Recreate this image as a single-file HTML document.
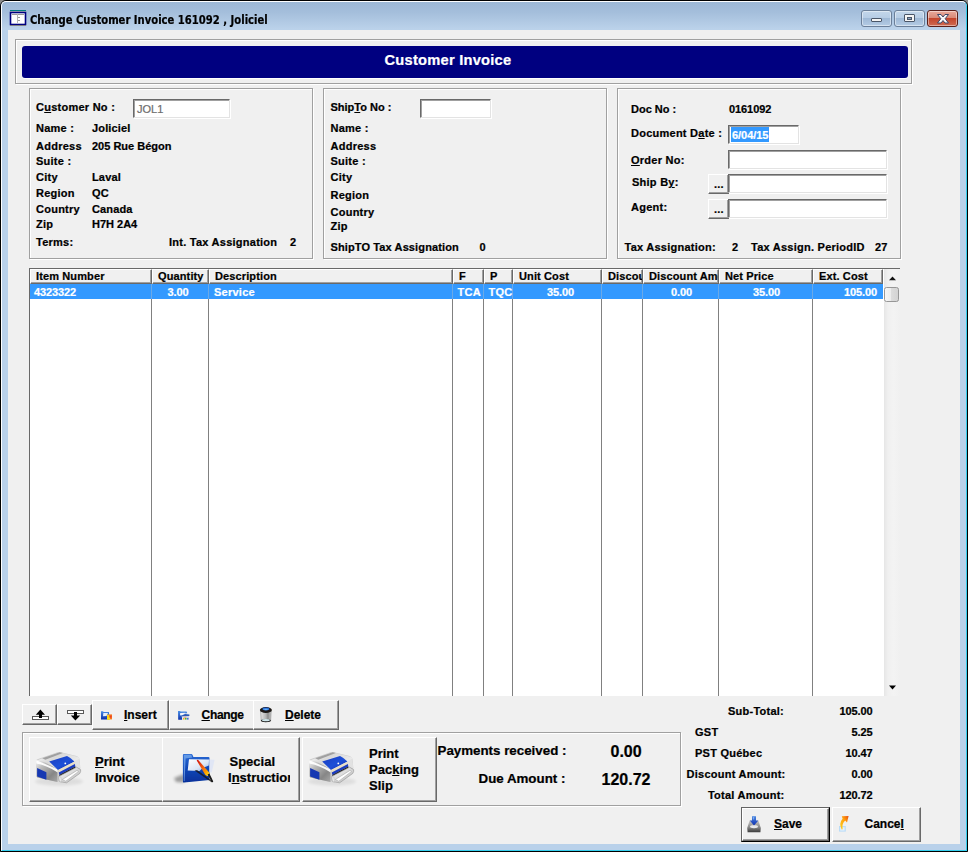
<!DOCTYPE html>
<html lang="en"><head><meta charset="utf-8"><title>Change Customer Invoice 161092 , Joliciel</title>
<style>
html,body{margin:0;padding:0}
body{width:968px;height:852px;position:relative;overflow:hidden;background:#8a8a8a;font-family:"Liberation Sans",Arial,sans-serif;font-weight:700;font-size:11px;color:#000}
div,span{position:absolute;box-sizing:border-box}
.t{white-space:nowrap;line-height:16px;letter-spacing:0.25px;-webkit-text-stroke:0.22px currentColor}
.t u{text-decoration:underline;text-underline-offset:1px}
.frame{left:0;top:0;width:968px;height:852px;border:1px solid #000;border-radius:6px 6px 0 0;background:#b9d1ea;overflow:hidden}
.frame .hl{left:0;top:0;width:966px;height:850px;border:1px solid;border-color:#fdfeff #35cfee #35cfee #fdfeff;border-radius:5px 5px 0 0;background:linear-gradient(#9db8d6 0px,#a4bedb 10px,#bbd2ea 27px,#b9d1ea 30px)}
.client{left:8px;top:30px;width:952px;height:814px;background:#f0f0f0}
.etch{border:1px solid #a0a0a0;box-shadow:1px 1px 0 #fff, inset 1px 1px 0 #fff}
.banner{background:#000080;border-radius:3px;box-shadow:0 1px 0 #fff}
.inp{background:#fff;border:1px solid;border-color:#696969 #e3e3e3 #e3e3e3 #696969;box-shadow:inset 1px 1px 0 #a0a0a0, 1px 1px 0 #fff}
.btn{background:#f0f0f0;border:1px solid;border-color:#fff #696969 #696969 #fff;box-shadow:inset -1px -1px 0 #a0a0a0}
.nr{border-right:none;box-shadow:inset 0 -1px 0 #a0a0a0}
.hdr{background:#f0f0f0;border:1px solid;border-color:#fff #696969 #696969 #fff;box-shadow:inset -1px -1px 0 #a0a0a0;overflow:hidden}
.vl{background:#808080;width:1px}
svg{position:absolute;overflow:visible}
</style></head><body>
<div class="frame"><div class="hl"></div></div>

<svg style="left:10px;top:10px" width="16" height="16" viewBox="0 0 16 16">
<rect x="0" y="0" width="16" height="1" fill="#008080"/><rect x="0" y="1" width="16" height="1" fill="#c0c0c0"/>
<rect x="0.5" y="2.5" width="15" height="12" fill="#fff" stroke="#000080" stroke-width="1.6"/>
<rect x="2" y="4" width="12" height="1" fill="#9a9a9a"/><rect x="7" y="4" width="1" height="9" fill="#b4b4b4"/>
<rect x="8" y="7" width="2" height="1" fill="#9a9a9a"/><rect x="8" y="10" width="2" height="1" fill="#9a9a9a"/>
<rect x="0" y="15" width="16" height="1" fill="#808080"/></svg>
<span class="t" style="left:30px;top:11.5px;font-family:'DejaVu Sans Condensed','DejaVu Sans',sans-serif;font-size:12px;letter-spacing:0;transform-origin:0 0;transform:scaleX(0.93);-webkit-text-stroke:0.2px #000">Change Customer Invoice 161092 , Joliciel</span>
<div style="left:861px;top:10px;width:31px;height:17px;border:1px solid #6b7f99;border-radius:3px;background:linear-gradient(#c3d6ea 0%,#b7cde5 45%,#9fb9d6 50%,#b4cbe4 100%);box-shadow:inset 0 0 0 1px rgba(255,255,255,.45)"></div>
<div style="left:894px;top:10px;width:31px;height:17px;border:1px solid #6b7f99;border-radius:3px;background:linear-gradient(#c3d6ea 0%,#b7cde5 45%,#9fb9d6 50%,#b4cbe4 100%);box-shadow:inset 0 0 0 1px rgba(255,255,255,.45)"></div>
<div style="left:927px;top:10px;width:31px;height:17px;border:1px solid #5a1f1a;border-radius:3px;background:linear-gradient(#e9a99b 0%,#d98a78 45%,#c4452c 50%,#cf6a52 100%);box-shadow:inset 0 0 0 1px rgba(255,255,255,.45)"></div>
<svg style="left:861px;top:10px" width="97" height="17" viewBox="0 0 97 17"><rect x="10.5" y="8.5" width="10" height="3" fill="#f4f4f4" stroke="#4a5668" stroke-width="1" rx="0.5"/><rect x="43.5" y="4.5" width="10" height="7" fill="#f4f4f4" stroke="#4a5668" stroke-width="1" rx="0.5"/><rect x="46.5" y="7.5" width="4" height="2" fill="#8aa2c0" stroke="#4a5668" stroke-width="1"/><path d="M76.5 4.5 L80 4.5 L82 7 L84 4.500 L87.5 4.500 L84.2 8.7 L87.500 13 L84 13 L82 10.5 L80 13 L76.500 13 L79.8 8.7 Z" fill="#f8f8f8" stroke="#3c4668" stroke-width="1" stroke-linejoin="round"/></svg>
<div class="client"></div>
<div class="etch" style="left:15px;top:39px;width:897px;height:45px;"></div>
<div class="banner" style="left:22px;top:46px;width:886px;height:32px;"></div>
<span class="t " style="top:51.92px;font-size:14.67px;left:384.5px;color:#fff;letter-spacing:0.24px;">Customer Invoice</span>
<div class="etch" style="left:29px;top:88px;width:284px;height:171px;"></div>
<div class="etch" style="left:323px;top:88px;width:284px;height:171px;"></div>
<div class="etch" style="left:617px;top:88px;width:284px;height:171px;"></div>
<span class="t " style="top:99.19px;font-size:11px;left:36px;">C<u>u</u>stomer No :</span>
<div class="inp" style="left:133px;top:99px;width:97px;height:19px;"></div>
<span class="t " style="top:101.19px;font-size:11px;left:137px;color:#6d6d6d;font-weight:400;letter-spacing:0px;">JOL1</span>
<span class="t " style="top:119.69px;font-size:11px;left:36px;">Name :</span>
<span class="t " style="top:119.69px;font-size:11px;left:92px;letter-spacing:0.15px;">Joliciel</span>
<span class="t " style="top:138.19px;font-size:11px;left:36px;">Address</span>
<span class="t " style="top:138.19px;font-size:11px;left:92px;letter-spacing:0px;">205 Rue Bégon</span>
<span class="t " style="top:153.19px;font-size:11px;left:36px;">Suite :</span>
<span class="t " style="top:168.69px;font-size:11px;left:36px;">City</span>
<span class="t " style="top:168.69px;font-size:11px;left:92px;letter-spacing:0.15px;">Laval</span>
<span class="t " style="top:184.69px;font-size:11px;left:36px;">Region</span>
<span class="t " style="top:184.69px;font-size:11px;left:92px;letter-spacing:0.15px;">QC</span>
<span class="t " style="top:200.69px;font-size:11px;left:36px;">Country</span>
<span class="t " style="top:200.69px;font-size:11px;left:92px;letter-spacing:0.15px;">Canada</span>
<span class="t " style="top:216.19px;font-size:11px;left:36px;">Zip</span>
<span class="t " style="top:216.19px;font-size:11px;left:92px;letter-spacing:0px;">H7H 2A4</span>
<span class="t " style="top:234.19px;font-size:11px;left:36px;">Terms:</span>
<span class="t " style="top:234.19px;font-size:11px;left:169px;">Int. Tax Assignation</span>
<span class="t " style="top:234.19px;font-size:11px;left:290px;">2</span>
<span class="t " style="top:99.19px;font-size:11px;left:330.5px;letter-spacing:0px;">Ship<u>T</u>o No :</span>
<div class="inp" style="left:420px;top:99px;width:71px;height:19px;"></div>
<span class="t " style="top:120.19px;font-size:11px;left:330.5px;">Name :</span>
<span class="t " style="top:138.19px;font-size:11px;left:330.5px;">Address</span>
<span class="t " style="top:153.19px;font-size:11px;left:330.5px;">Suite :</span>
<span class="t " style="top:169.19px;font-size:11px;left:330.5px;">City</span>
<span class="t " style="top:186.69px;font-size:11px;left:330.5px;">Region</span>
<span class="t " style="top:203.69px;font-size:11px;left:330.5px;">Country</span>
<span class="t " style="top:218.19px;font-size:11px;left:330.5px;">Zip</span>
<span class="t " style="top:239.19px;font-size:11px;left:330.5px;letter-spacing:0.12px;">ShipTO Tax Assignation</span>
<span class="t " style="top:239.19px;font-size:11px;left:479.5px;">0</span>
<span class="t " style="top:101.19px;font-size:11px;left:631px;letter-spacing:0px;">Doc No :</span>
<span class="t " style="top:101.19px;font-size:11px;left:729px;letter-spacing:-0.08px;">0161092</span>
<span class="t " style="top:125.19px;font-size:11px;left:631px;">Document D<u>a</u>te :</span>
<div class="inp" style="left:728px;top:125px;width:71px;height:19px;"></div>
<div class="" style="left:731px;top:127px;width:38px;height:15px;background:#3399ff"></div>
<span class="t " style="top:127.19px;font-size:11px;left:732px;color:#fff;letter-spacing:-0.05px;">6/04/15</span>
<span class="t " style="top:152.19px;font-size:11px;left:631px;"><u>O</u>rder No:</span>
<div class="inp" style="left:728px;top:150px;width:159px;height:19px;"></div>
<span class="t " style="top:174.19px;font-size:11px;left:632px;">Ship B<u>y</u>:</span>
<div class="btn" style="left:708px;top:174px;width:21px;height:20px;"></div>
<span class="t " style="top:176.19px;font-size:11px;left:714px;">...</span>
<div class="inp" style="left:728px;top:174px;width:159px;height:19px;"></div>
<span class="t " style="top:198.69px;font-size:11px;left:631px;">A<u>g</u>ent:</span>
<div class="btn" style="left:708px;top:199px;width:21px;height:20px;"></div>
<span class="t " style="top:201.19px;font-size:11px;left:714px;">...</span>
<div class="inp" style="left:728px;top:199px;width:159px;height:19px;"></div>
<span class="t " style="top:239.19px;font-size:11px;left:624.5px;">Tax Assignation:</span>
<span class="t " style="top:239.19px;font-size:11px;left:732px;">2</span>
<span class="t " style="top:239.19px;font-size:11px;left:751px;">Tax Assign. PeriodID</span>
<span class="t " style="top:239.19px;font-size:11px;left:875px;">27</span>
<div class="" style="left:29px;top:268px;width:871px;height:428px;background:#fff;border-top:1px solid #696969;border-left:1px solid #696969"></div>
<div class="hdr" style="left:30px;top:269px;width:122px;height:15px"><span class="t" style="left:5px;top:-1.8px;letter-spacing:0.12px">Item Number</span></div>
<div class="hdr" style="left:152px;top:269px;width:57px;height:15px"><span class="t" style="left:5px;top:-1.8px;letter-spacing:0.12px">Quantity</span></div>
<div class="hdr" style="left:209px;top:269px;width:244px;height:15px"><span class="t" style="left:5px;top:-1.8px;letter-spacing:0.12px">Description</span></div>
<div class="hdr" style="left:453px;top:269px;width:31px;height:15px"><span class="t" style="left:5px;top:-1.8px;letter-spacing:0.12px">F</span></div>
<div class="hdr" style="left:484px;top:269px;width:29px;height:15px"><span class="t" style="left:5px;top:-1.8px;letter-spacing:0.12px">P</span></div>
<div class="hdr" style="left:513px;top:269px;width:89px;height:15px"><span class="t" style="left:5px;top:-1.8px;letter-spacing:0.12px">Unit Cost</span></div>
<div class="hdr" style="left:602px;top:269px;width:41px;height:15px"><span class="t" style="left:5px;top:-1.8px;letter-spacing:0.12px">Discount</span></div>
<div class="hdr" style="left:643px;top:269px;width:76px;height:15px"><span class="t" style="left:5px;top:-1.8px;letter-spacing:0.12px">Discount Amount</span></div>
<div class="hdr" style="left:719px;top:269px;width:94px;height:15px"><span class="t" style="left:5px;top:-1.8px;letter-spacing:0.12px">Net Price</span></div>
<div class="hdr" style="left:813px;top:269px;width:70px;height:15px"><span class="t" style="left:5px;top:-1.8px;letter-spacing:0.12px">Ext. Cost</span></div>
<div class="vl" style="left:151px;top:284px;height:412px"></div>
<div class="vl" style="left:208px;top:284px;height:412px"></div>
<div class="vl" style="left:452px;top:284px;height:412px"></div>
<div class="vl" style="left:483px;top:284px;height:412px"></div>
<div class="vl" style="left:512px;top:284px;height:412px"></div>
<div class="vl" style="left:601px;top:284px;height:412px"></div>
<div class="vl" style="left:642px;top:284px;height:412px"></div>
<div class="vl" style="left:718px;top:284px;height:412px"></div>
<div class="vl" style="left:812px;top:284px;height:412px"></div>
<div class="" style="left:30px;top:284px;width:853px;height:15px;background:#3399ff"></div>
<div class="vl" style="left:151px;top:284px;height:15px;background:#6aa9e8"></div>
<div class="vl" style="left:208px;top:284px;height:15px;background:#6aa9e8"></div>
<div class="vl" style="left:452px;top:284px;height:15px;background:#6aa9e8"></div>
<div class="vl" style="left:483px;top:284px;height:15px;background:#6aa9e8"></div>
<div class="vl" style="left:512px;top:284px;height:15px;background:#6aa9e8"></div>
<div class="vl" style="left:601px;top:284px;height:15px;background:#6aa9e8"></div>
<div class="vl" style="left:642px;top:284px;height:15px;background:#6aa9e8"></div>
<div class="vl" style="left:718px;top:284px;height:15px;background:#6aa9e8"></div>
<div class="vl" style="left:812px;top:284px;height:15px;background:#6aa9e8"></div>
<span class="t " style="top:284.19px;font-size:11px;left:34px;color:#fff;letter-spacing:-0.1px;">4323322</span>
<span class="t " style="top:284.19px;font-size:11px;right:779.5px;color:#fff;letter-spacing:-0.1px;">3.00</span>
<span class="t " style="top:284.19px;font-size:11px;left:214px;color:#fff;">Service</span>
<span class="t " style="top:284.19px;font-size:11px;left:457.5px;color:#fff;">TCA</span>
<span class="t " style="top:284.19px;font-size:11px;left:488.5px;color:#fff;">TQC</span>
<span class="t " style="top:284.19px;font-size:11px;right:394px;color:#fff;letter-spacing:-0.1px;">35.00</span>
<span class="t " style="top:284.19px;font-size:11px;right:276px;color:#fff;letter-spacing:-0.1px;">0.00</span>
<span class="t " style="top:284.19px;font-size:11px;right:188px;color:#fff;letter-spacing:-0.1px;">35.00</span>
<span class="t " style="top:284.19px;font-size:11px;right:91px;color:#fff;letter-spacing:-0.1px;">105.00</span>
<div class="" style="left:884px;top:269px;width:16px;height:427px;background:linear-gradient(90deg,#e6e6e6,#f0f0f0 25%,#f3f3f3 60%,#f0f0f0)"></div>
<svg style="left:884px;top:269px" width="16" height="427" viewBox="0 0 16 427"><path d="M5 11.2 L8.5 7.4 L12 11.2 Z" fill="#111"/><path d="M5 416.5 L12 416.5 L8.5 420.5 Z" fill="#000"/><rect x="0.5" y="18.5" width="14" height="14" rx="2" fill="url(#tg)" stroke="#979797" stroke-width="1"/><defs><linearGradient id="tg" x1="0" x2="1" y1="0" y2="0"><stop offset="0" stop-color="#f6f6f6"/><stop offset="0.45" stop-color="#ececec"/><stop offset="0.5" stop-color="#dcdcdc"/><stop offset="1" stop-color="#d2d2d2"/></linearGradient></defs></svg>
<div class="btn" style="left:22px;top:704px;width:35px;height:21px;"></div>
<div class="btn" style="left:57px;top:704px;width:35px;height:21px;"></div>
<svg style="left:22px;top:704px" width="70" height="20" viewBox="0 0 70 20"><rect x="10.5" y="12.5" width="16" height="3" fill="#fff" stroke="#5a5a5a" stroke-width="1"/><path d="M18.4 5.6 L23 10.8 L20 10.8 L20 14 L17 14 L17 10.8 L13.8 10.8 Z" fill="#000"/><rect x="45.5" y="6.500" width="16" height="3" fill="#fff" stroke="#5a5a5a" stroke-width="1"/><path d="M53.4 16.4 L48.8 11.4 L52 11.4 L52 8 L55 8 L55 11.4 L58.2 11.4 Z" fill="#000"/></svg>
<div class="btn" style="left:92px;top:700px;width:77px;height:30px;"></div>
<div class="btn nr" style="left:169px;top:700px;width:84px;height:30px;"></div>
<div class="btn" style="left:253px;top:700px;width:86px;height:30px;"></div>
<span class="t " style="top:706.84px;font-size:12px;left:124px;letter-spacing:0px;"><u>I</u>nsert</span>
<span class="t " style="top:706.84px;font-size:12px;left:201.5px;letter-spacing:-0.3px;"><u>C</u>hange</span>
<span class="t " style="top:706.84px;font-size:12px;left:285px;letter-spacing:0px;"><u>D</u>elete</span>
<div class="etch" style="left:22px;top:732px;width:659px;height:74px;"></div>
<div class="btn nr" style="left:29px;top:737px;width:133px;height:65px;"></div>
<div class="btn" style="left:162px;top:737px;width:138px;height:65px;"></div>
<div class="btn" style="left:302px;top:737px;width:135px;height:65px;"></div>
<span class="t " style="top:754.00px;font-size:13px;left:95px;letter-spacing:0px;"><u>P</u>rint</span>
<span class="t " style="top:769.50px;font-size:13px;left:95px;letter-spacing:0px;">Invoice</span>
<span class="t " style="top:753.50px;font-size:13px;left:229.5px;letter-spacing:0px;">Special</span>
<div style="left:228px;top:768px;width:61.5px;height:20px;overflow:hidden"><span class="t" style="left:0;top:1.5px;font-size:13px;letter-spacing:0">I<u>n</u>struction</span></div>
<span class="t " style="top:745.50px;font-size:13px;left:369px;letter-spacing:0px;">Print</span>
<span class="t " style="top:761.50px;font-size:13px;left:369px;letter-spacing:0px;">Pac<u>k</u>ing</span>
<span class="t " style="top:777.50px;font-size:13px;left:369px;letter-spacing:0px;">Slip</span>
<span class="t " style="top:743.38px;font-size:13.33px;left:437.5px;letter-spacing:0px;">Payments received :</span>
<span class="t " style="top:771.38px;font-size:13.33px;left:478.5px;letter-spacing:0px;">Due Amount :</span>
<span class="t " style="top:743.96px;font-size:16px;left:610.5px;letter-spacing:0px;">0.00</span>
<span class="t " style="top:772.46px;font-size:16px;left:601.5px;letter-spacing:0px;">120.72</span>
<span class="t " style="top:703.19px;font-size:11px;right:184px;">Sub-Total:</span>
<span class="t " style="top:703.19px;font-size:11px;right:95.5px;letter-spacing:-0.1px;">105.00</span>
<span class="t " style="top:724.19px;font-size:11px;left:695px;">GST</span>
<span class="t " style="top:724.19px;font-size:11px;right:95.5px;letter-spacing:-0.1px;">5.25</span>
<span class="t " style="top:745.19px;font-size:11px;left:695px;">PST Québec</span>
<span class="t " style="top:745.19px;font-size:11px;right:95.5px;letter-spacing:-0.1px;">10.47</span>
<span class="t " style="top:765.69px;font-size:11px;right:182.5px;">Discount Amount:</span>
<span class="t " style="top:765.69px;font-size:11px;right:95.5px;letter-spacing:-0.1px;">0.00</span>
<span class="t " style="top:787.19px;font-size:11px;right:183.5px;">Total Amount:</span>
<span class="t " style="top:787.19px;font-size:11px;right:95.5px;letter-spacing:-0.1px;">120.72</span>
<div class="" style="left:741px;top:807px;width:89px;height:35px;border:1px solid;border-color:#646464 #000 #000 #646464;background:#f0f0f0"></div>
<div class="btn" style="left:742px;top:808px;width:87px;height:33px;"></div>
<div class="btn" style="left:832px;top:807px;width:89px;height:35px;"></div>
<span class="t " style="top:816.34px;font-size:12px;left:774px;letter-spacing:0px;"><u>S</u>ave</span>
<span class="t " style="top:816.34px;font-size:12px;left:864.5px;letter-spacing:0px;">Cance<u>l</u></span>
<svg style="left:30px;top:745px" width="60" height="45" viewBox="0 0 60 45">
<defs>
<linearGradient id="pta" x1="0" y1="0" x2="1" y2="0.6"><stop offset="0" stop-color="#ffffff"/><stop offset="0.45" stop-color="#d8d8d8"/><stop offset="1" stop-color="#efefef"/></linearGradient>
<linearGradient id="pfa" x1="0" y1="0" x2="1" y2="1"><stop offset="0" stop-color="#f4f4f4"/><stop offset="0.28" stop-color="#bcbcbc"/><stop offset="0.7" stop-color="#868686"/><stop offset="1" stop-color="#a8a8a8"/></linearGradient>
<linearGradient id="pba" x1="0" y1="0" x2="1" y2="1"><stop offset="0" stop-color="#1a3cbe"/><stop offset="0.55" stop-color="#1e50d8"/><stop offset="1" stop-color="#0a2aa8"/></linearGradient>
<linearGradient id="pya" x1="0" y1="0" x2="1" y2="1"><stop offset="0" stop-color="#ffffff"/><stop offset="1" stop-color="#b4b4b4"/></linearGradient>
<filter id="psa" x="-20%" y="-20%" width="140%" height="140%"><feGaussianBlur stdDeviation="1.6"/></filter>
<filter id="pza"><feGaussianBlur stdDeviation="0.4"/></filter>
</defs>
<ellipse cx="29" cy="36.5" rx="24" ry="4" fill="#000" opacity="0.08" filter="url(#psa)"/>
<g filter="url(#pza)">
<path d="M6.2 16 Q6 14.6 8 14 L27.5 7.2 Q29 6.700 31 7.2 L46.5 11 Q49.3 11.8 49.6 14.5 L50.3 23.5 L27.3 37 L7.5 32.6 Q6.6 32.3 6.6 31 Z" fill="#cdcdcd"/>
<path d="M6.2 15.8 L28.5 7 L48.5 12 Q49.6 13 49.6 15 L27.5 25.3 Z" fill="url(#pta)"/>
<path d="M44.4 16.6 L49.4 13.6 L50.3 23.5 L45.6 22.8 Z" fill="#e2e2e2"/>
<path d="M6.2 15.6 Q13 15 27.4 24.6 L27.4 37 L7.3 32.6 Q6.6 32.2 6.6 31 Z" fill="url(#pfa)"/>
<path d="M6.3 15.2 L27.7 24.2 L27.7 27.6 Q17 20.4 6.3 18.600 Z" fill="#ffffff" opacity="0.92"/>
<path d="M12.2 13.3 L29.6 7.2 L32.8 8 L15.4 14.8 Z" fill="#909090" opacity="0.8"/>
<path d="M19.2 16.6 L37 10.9 Q41.5 13 44.4 16.6 L28 25 Z" fill="url(#pba)"/>
<circle cx="35.3" cy="18.4" r="0.9" fill="#fff"/>
<path d="M28.1 25 L44.5 16.8 L44.9 19 L28.8 27.4 Z" fill="#e9dfc6"/>
<path d="M28.8 27.4 L44.9 19 L45.3 21.5 L29.4 30 Z" fill="#1b3cc0"/>
<path d="M29.3 30.1 L45.3 21.6 L45.6 22.9 L29.4 31.5 Z" fill="#101010"/>
<path d="M7.1 22.9 L16.4 27.3 L16.4 34.7 L7.1 31.6 Z" fill="#1838b2"/>
<path d="M28.6 31.6 L46.6 22.2 L50.6 24.6 Q51 26.5 49.8 28.4 L36.6 37.8 L29.6 36.6 Z" fill="url(#pya)" stroke="#9c9c9c" stroke-width="0.7"/>
<path d="M32.2 34.6 L47 25.4 L48.6 26.4 L35.8 36.2 Z" fill="#fff" stroke="#a8a8a8" stroke-width="0.6"/>
<path d="M28.6 31.6 L31 32.2 L31.4 36.9 L29.6 36.6 Z" fill="#ececec" stroke="#b0b0b0" stroke-width="0.4"/>
</g></svg>
<svg style="left:303px;top:745px" width="60" height="45" viewBox="0 0 60 45">
<defs>
<linearGradient id="ptb" x1="0" y1="0" x2="1" y2="0.6"><stop offset="0" stop-color="#ffffff"/><stop offset="0.45" stop-color="#d8d8d8"/><stop offset="1" stop-color="#efefef"/></linearGradient>
<linearGradient id="pfb" x1="0" y1="0" x2="1" y2="1"><stop offset="0" stop-color="#f4f4f4"/><stop offset="0.28" stop-color="#bcbcbc"/><stop offset="0.7" stop-color="#868686"/><stop offset="1" stop-color="#a8a8a8"/></linearGradient>
<linearGradient id="pbb" x1="0" y1="0" x2="1" y2="1"><stop offset="0" stop-color="#1a3cbe"/><stop offset="0.55" stop-color="#1e50d8"/><stop offset="1" stop-color="#0a2aa8"/></linearGradient>
<linearGradient id="pyb" x1="0" y1="0" x2="1" y2="1"><stop offset="0" stop-color="#ffffff"/><stop offset="1" stop-color="#b4b4b4"/></linearGradient>
<filter id="psb" x="-20%" y="-20%" width="140%" height="140%"><feGaussianBlur stdDeviation="1.6"/></filter>
<filter id="pzb"><feGaussianBlur stdDeviation="0.4"/></filter>
</defs>
<ellipse cx="29" cy="36.5" rx="24" ry="4" fill="#000" opacity="0.08" filter="url(#psb)"/>
<g filter="url(#pzb)">
<path d="M6.2 16 Q6 14.6 8 14 L27.5 7.2 Q29 6.700 31 7.2 L46.5 11 Q49.3 11.8 49.6 14.5 L50.3 23.5 L27.3 37 L7.5 32.6 Q6.6 32.3 6.6 31 Z" fill="#cdcdcd"/>
<path d="M6.2 15.8 L28.5 7 L48.5 12 Q49.6 13 49.6 15 L27.5 25.3 Z" fill="url(#ptb)"/>
<path d="M44.4 16.6 L49.4 13.6 L50.3 23.5 L45.6 22.8 Z" fill="#e2e2e2"/>
<path d="M6.2 15.6 Q13 15 27.4 24.6 L27.4 37 L7.3 32.6 Q6.6 32.2 6.6 31 Z" fill="url(#pfb)"/>
<path d="M6.3 15.2 L27.7 24.2 L27.7 27.6 Q17 20.4 6.3 18.600 Z" fill="#ffffff" opacity="0.92"/>
<path d="M12.2 13.3 L29.6 7.2 L32.8 8 L15.4 14.8 Z" fill="#909090" opacity="0.8"/>
<path d="M19.2 16.6 L37 10.9 Q41.5 13 44.4 16.6 L28 25 Z" fill="url(#pbb)"/>
<circle cx="35.3" cy="18.4" r="0.9" fill="#fff"/>
<path d="M28.1 25 L44.5 16.8 L44.9 19 L28.8 27.4 Z" fill="#e9dfc6"/>
<path d="M28.8 27.4 L44.9 19 L45.3 21.5 L29.4 30 Z" fill="#1b3cc0"/>
<path d="M29.3 30.1 L45.3 21.6 L45.6 22.9 L29.4 31.5 Z" fill="#101010"/>
<path d="M7.1 22.9 L16.4 27.3 L16.4 34.7 L7.1 31.6 Z" fill="#1838b2"/>
<path d="M28.6 31.6 L46.6 22.2 L50.6 24.6 Q51 26.5 49.8 28.4 L36.6 37.8 L29.6 36.6 Z" fill="url(#pyb)" stroke="#9c9c9c" stroke-width="0.7"/>
<path d="M32.2 34.6 L47 25.4 L48.6 26.4 L35.8 36.2 Z" fill="#fff" stroke="#a8a8a8" stroke-width="0.6"/>
<path d="M28.6 31.6 L31 32.2 L31.4 36.9 L29.6 36.6 Z" fill="#ececec" stroke="#b0b0b0" stroke-width="0.4"/>
</g></svg>
<svg style="left:168px;top:745px" width="60" height="45" viewBox="0 0 60 45">
<defs>
<linearGradient id="fb" x1="0" y1="0" x2="0" y2="1"><stop offset="0" stop-color="#2a6ad4"/><stop offset="0.5" stop-color="#1048b8"/><stop offset="1" stop-color="#06309a"/></linearGradient>
<linearGradient id="fp" x1="0" y1="0" x2="1" y2="1"><stop offset="0" stop-color="#ffffff"/><stop offset="0.6" stop-color="#dbe6f6"/><stop offset="1" stop-color="#8fb0e2"/></linearGradient>
<linearGradient id="fr" x1="0" y1="0" x2="1" y2="1"><stop offset="0" stop-color="#d01010"/><stop offset="0.45" stop-color="#f05a10"/><stop offset="0.8" stop-color="#ffb000"/><stop offset="1" stop-color="#ffe640"/></linearGradient>
<filter id="fs" x="-30%" y="-30%" width="160%" height="160%"><feGaussianBlur stdDeviation="1.5"/></filter>
<filter id="fz"><feGaussianBlur stdDeviation="0.35"/></filter>
</defs>
<path d="M6 33 L16 29 L16 37.5 L8 37 Z" fill="#000" opacity="0.35" filter="url(#fs)"/>
<g filter="url(#fz)">
<path d="M14.9 10 Q14.9 9 16 9 L23.5 9 Q24.4 9 24.8 10.5 L25.4 12.1 L40.5 12.1 Q41.5 12.1 41.5 13.2 L41.5 35 L16 37.6 Q14.9 37.6 14.9 36.4 Z" fill="url(#fb)"/>
<path d="M15.8 10.4 Q15.8 9.8 16.6 9.8 L23.3 9.8 L24.2 12.6 L17.6 13.6 L16.6 36 L15.8 36 Z" fill="#7fb0f0" opacity="0.7"/>
<path d="M41.4 14.6 L46.6 14.8 L43.8 27.2 L41.4 27.4 Z" fill="#dfe6f5" opacity="0.9"/>
<path d="M21 14.3 L41 14.6 L40.8 20.5 Q35 22 31.5 26 L19.7 25.5 Z" fill="url(#fp)"/>
<path d="M26.6 25.6 L43.6 37.2 L44.6 36.2 L29 25 Z" fill="#161616" opacity="0.8"/>
<path d="M28.7 15.4 Q29.4 14.4 30.5 15.2 L41.2 27.6 Q42 29.8 40.2 30.8 Q38.4 31.2 37.2 29.8 Z" fill="url(#fr)"/>
<path d="M39.6 29.6 L41.4 28.6 L45.2 36.2 Q45.2 37.6 43.8 37.3 Z" fill="#1a1a1a"/>
</g></svg>
<svg style="left:100px;top:709.5px" width="16" height="12" viewBox="0 0 16 12">
<defs><linearGradient id="ib" x1="0" y1="0" x2="0" y2="1"><stop offset="0" stop-color="#4a90e8"/><stop offset="1" stop-color="#0a2ea8"/></linearGradient><filter id="iz"><feGaussianBlur stdDeviation="0.4"/></filter></defs>
<g filter="url(#iz)"><path d="M1 1.2 L3 1.2 L3.6 2 L9 2 L9.2 9.6 L1 9.6 Z" fill="url(#ib)"/><path d="M3.4 3 L8 3 L6.5 6 L3 6.2 Z" fill="#e8f0fb"/>
<rect x="7" y="4.6" width="2.4" height="5" fill="#ffd21a"/><rect x="9" y="4.4" width="3" height="5" fill="#f57a1e"/><rect x="10" y="5.6" width="1.6" height="2" fill="#e8402a"/><rect x="7" y="7.6" width="3" height="2" fill="#ffe11a"/></g></svg>
<svg style="left:177.4px;top:709.5px" width="16" height="12" viewBox="0 0 16 12">
<defs><linearGradient id="cb" x1="0" y1="0" x2="0" y2="1"><stop offset="0" stop-color="#4a90e8"/><stop offset="1" stop-color="#0a2ea8"/></linearGradient><filter id="cz"><feGaussianBlur stdDeviation="0.4"/></filter></defs>
<g filter="url(#cz)"><path d="M1 1 L3 1 L3.6 1.6 L9.6 1.6 L10.2 3.2 L4.4 3.6 L5.2 9.8 L1.2 9.8 Z" fill="url(#cb)"/><path d="M3.2 3 L8.5 2.8 L6.5 4.8 L3 5.6 Z" fill="#f2f6fc"/>
<path d="M4.6 5.6 L8 4 L12.4 4.6 L12.4 6 L5 6.6 Z" fill="#2a58b8"/>
<rect x="5.6" y="6.4" width="6.4" height="1.4" fill="#c8ccd8"/><rect x="7.4" y="6.6" width="1.8" height="1.2" fill="#e89a8a"/>
<rect x="6" y="8" width="1.6" height="1.6" fill="#f5b41e"/><rect x="8" y="8" width="1.6" height="1.6" fill="#3cb44a"/><rect x="10" y="8" width="1.6" height="1.6" fill="#4a6ad8"/></g></svg>
<svg style="left:257px;top:704px" width="18" height="20" viewBox="0 0 18 20">
<defs><linearGradient id="tb" x1="0" y1="0" x2="1" y2="0"><stop offset="0" stop-color="#e6e6e6"/><stop offset="0.5" stop-color="#b4b4b4"/><stop offset="0.7" stop-color="#8a8a8a"/><stop offset="1" stop-color="#d0d0d0"/></linearGradient>
<radialGradient id="tc" cx="0.5" cy="0.7" r="0.7"><stop offset="0" stop-color="#6ab8ff"/><stop offset="1" stop-color="#0c4cc0"/></radialGradient><filter id="tz"><feGaussianBlur stdDeviation="0.35"/></filter></defs>
<g filter="url(#tz)"><path d="M3.6 7 L14.2 7 L13.6 17 L4.2 17 Z" fill="url(#tb)" stroke="#7a7a7a" stroke-width="0.5"/>
<ellipse cx="8.9" cy="16.6" rx="4.9" ry="1.7" fill="#1c1c1c"/><ellipse cx="8.9" cy="16.2" rx="3.9" ry="1.1" fill="#cfe6ea"/>
<ellipse cx="8.9" cy="6" rx="6" ry="3" fill="#1a1714"/><ellipse cx="8.9" cy="5" rx="3.5" ry="1.4" fill="url(#tc)"/></g></svg>
<svg style="left:746px;top:815px" width="18" height="20" viewBox="0 0 18 20">
<defs><linearGradient id="sg" x1="0" y1="0" x2="0" y2="1"><stop offset="0" stop-color="#c8c8c8"/><stop offset="0.55" stop-color="#8c8c8c"/><stop offset="1" stop-color="#3c3c3c"/></linearGradient>
<linearGradient id="sa" x1="0" y1="0" x2="0" y2="1"><stop offset="0" stop-color="#4a86e0"/><stop offset="1" stop-color="#1030b0"/></linearGradient><filter id="sz"><feGaussianBlur stdDeviation="0.4"/></filter></defs>
<g filter="url(#sz)"><path d="M3.6 5.4 L12.4 5.4 L14.8 13 L14.4 17.2 L1.6 17.2 L1.2 13 Z" fill="url(#sg)"/>
<ellipse cx="8" cy="11.6" rx="4" ry="1.6" fill="#e8e8e8"/>
<path d="M6 1.2 L10 1.2 L10 5.6 L12.4 5.6 L8 10.6 L3.8 5.6 L6 5.6 Z" fill="url(#sa)"/><path d="M6.8 2 L8.2 2 L8.2 4.5 L6.8 4.5 Z" fill="#8ab8f4" opacity="0.8"/></g></svg>
<svg style="left:838px;top:815px" width="14" height="20" viewBox="0 0 14 20">
<defs><linearGradient id="ca" x1="0" y1="1" x2="1" y2="0"><stop offset="0" stop-color="#ffd21a"/><stop offset="0.6" stop-color="#ffa010"/><stop offset="1" stop-color="#e84a10"/></linearGradient><filter id="kz"><feGaussianBlur stdDeviation="0.4"/></filter></defs>
<g filter="url(#kz)"><rect x="1" y="11" width="6.8" height="5.6" fill="#b9dcf8"/><rect x="2.2" y="12.2" width="4.4" height="3.4" fill="#e6f2fd"/>
<path d="M3.6 14.6 Q0.6 8 4.6 3.8 L3.8 1.2 L10.6 1 L9 7.6 L7.2 5.6 Q3.6 8.6 4.6 14.2 Z" fill="url(#ca)"/></g></svg>
</body></html>
